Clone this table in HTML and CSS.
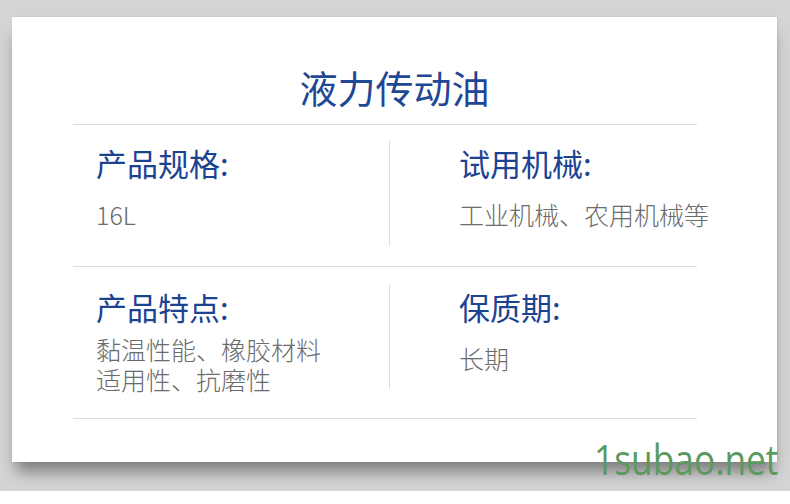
FILE: index.html
```html
<!DOCTYPE html>
<html>
<head>
    <meta charset="utf-8" />
    <title>液力传动油</title>
    <link rel="stylesheet" href="styles.css">
</head>
<body>
    <div class="card">
        <h1 class="title">液力传动油</h1>
        <div class="specs">
            <div class="spec-row">
                <div class="spec-cell">
                    <div class="spec-label">产品规格:</div>
                    <div class="spec-value">16L</div>
                </div>
                <div class="spec-cell">
                    <div class="spec-label">试用机械:</div>
                    <div class="spec-value">工业机械、农用机械等</div>
                </div>
            </div>
            <div class="spec-row spec-row-second">
                <div class="spec-cell">
                    <div class="spec-label">产品特点:</div>
                    <div class="spec-value spec-value-tight">黏温性能、橡胶材料<br>适用性、抗磨性</div>
                </div>
                <div class="spec-cell">
                    <div class="spec-label">保质期:</div>
                    <div class="spec-value">长期</div>
                </div>
            </div>
        </div>
    </div>
    <div class="watermark">1subao.net</div>
</body>
</html>
```

FILE: styles.css
```css
html {
    background: #ffffff;
}

body {
    margin: 0;
    height: 491px;
    padding-top: 17px;
    box-sizing: border-box;
    background: #d4d4d4;
    font-family: "Noto Sans CJK SC", "Noto Sans", sans-serif;
    position: relative;
}

.card {
    width: 765px;
    height: 445px;
    margin-left: 12px;
    box-sizing: border-box;
    padding-top: 45px;
    background: #ffffff;
    box-shadow: 0 14px 14px -4px rgba(0, 0, 0, 0.4), 1px 0 2px rgba(0, 0, 0, 0.08);
}

.title {
    margin: 0 0 12px;
    text-align: center;
    font-size: 38px;
    line-height: 50px;
    font-weight: 400;
    color: #1e4795;
}

.specs {
    margin-left: 61px;
    width: 624px;
    border-top: 1px solid #dddddd;
}

.spec-row {
    display: grid;
    grid-template-columns: 317px 1fr;
    padding: 16px 0 20px;
    border-bottom: 1px solid #dddddd;
}

.spec-row-second {
    padding: 18px 0 29px;
}

.spec-cell {
    height: 105px;
    box-sizing: border-box;
    padding: 2px 0 0 23px;
    white-space: nowrap;
}

.spec-row-second .spec-cell {
    height: 104px;
}

.spec-cell:first-child {
    border-right: 1px solid #dddddd;
}

.spec-cell:last-child {
    padding-left: 69px;
}

.spec-label {
    font-size: 31px;
    line-height: 40px;
    color: #1c4391;
}

.spec-value {
    margin-top: 16px;
    font-size: 25px;
    line-height: 31px;
    font-weight: 300;
    color: #6b6b6b;
}

.spec-value-tight {
    margin-top: 7px;
    line-height: 30px;
}

.watermark {
    position: absolute;
    right: 12px;
    top: 430px;
    font-family: "Open Sans", sans-serif;
    font-size: 42px;
    color: #5a9a5e;
    transform: scaleX(0.84);
    transform-origin: right center;
}
```
